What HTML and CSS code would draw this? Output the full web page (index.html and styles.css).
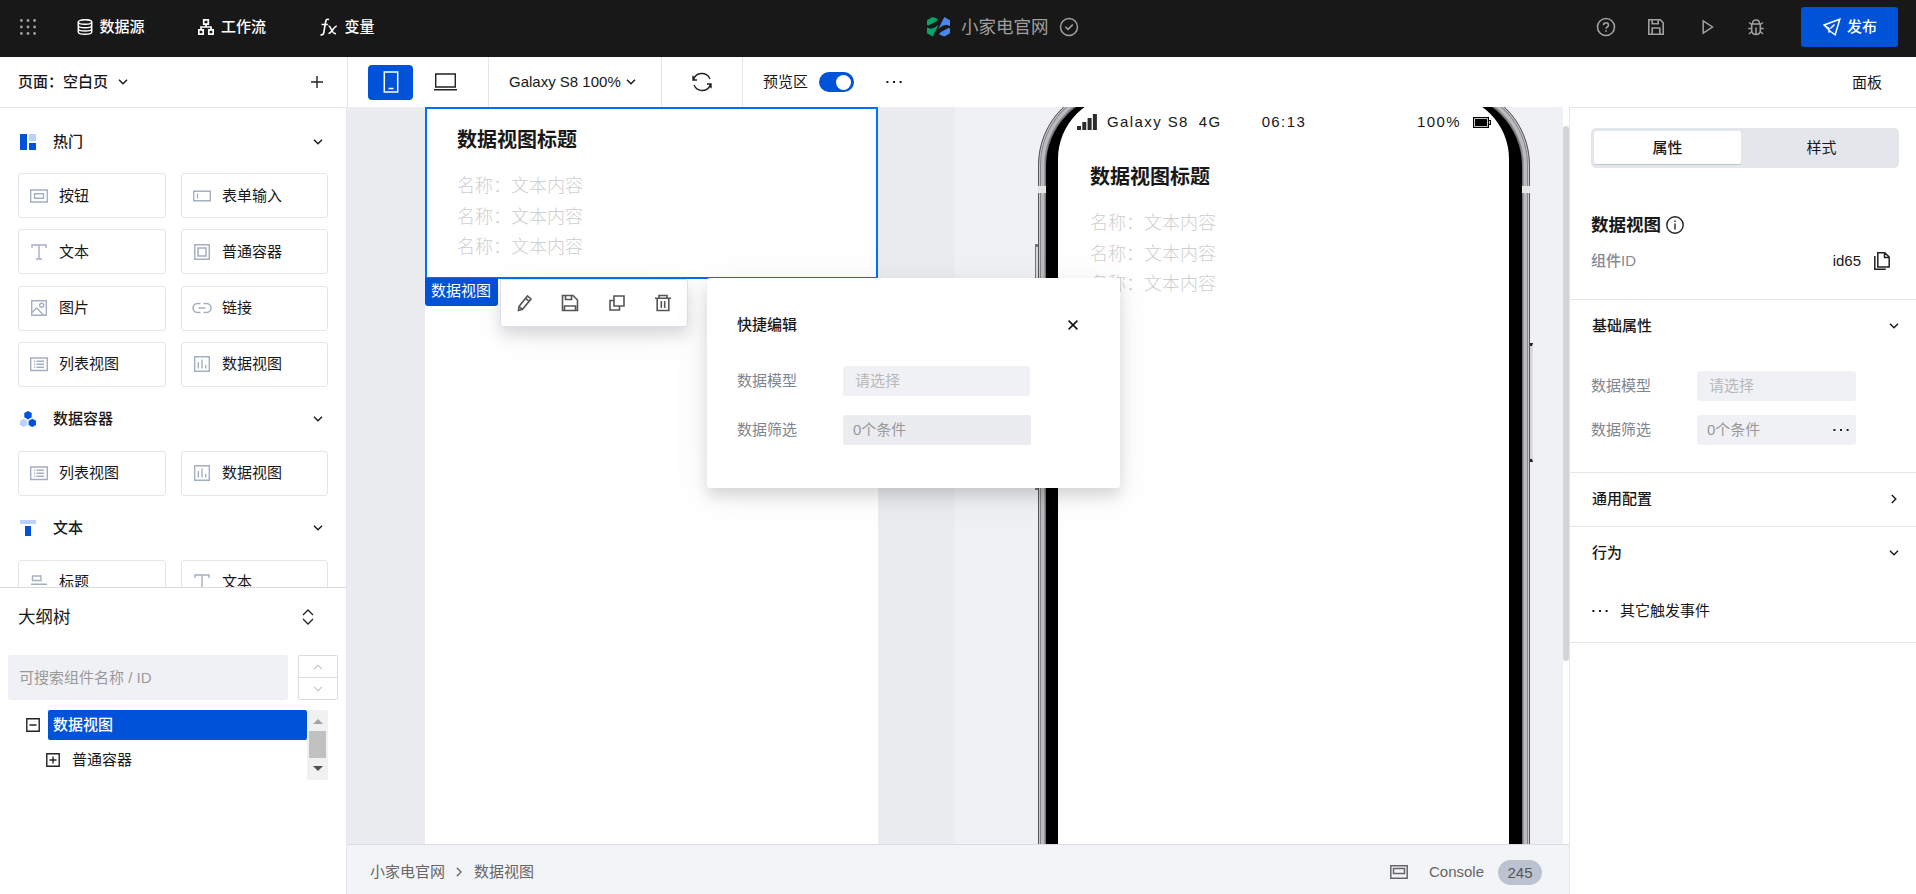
FILE: index.html
```html
<!DOCTYPE html>
<html lang="zh-CN">
<head>
  <meta charset="UTF-8">
  <meta name="viewport" content="width=device-width, initial-scale=1">
  <title>小家电官网</title>
  <link rel="stylesheet" href="styles.css">
</head>
<body>
  <!-- Iconos reutilizados -->
  <svg class="sprite">
    <symbol id="i-down" viewBox="0 0 10 6"><path d="M1 .8l4 4 4-4" fill="none" stroke="currentColor" stroke-width="1.4"/></symbol>
    <symbol id="i-text" viewBox="0 0 18 18"><path d="M2 5V2h14v3M9 2v14M6 16h6" fill="none" stroke="currentColor" stroke-width="1.4"/></symbol>
    <symbol id="i-list" viewBox="0 0 18 18"><path d="M.7 3h16.6v12.5H.7zM4 6.3h1.2M4 9.3h1.2M4 12.3h1.2M6.5 6.3H14M6.5 9.3H14M6.5 12.3H14" fill="none" stroke="currentColor" stroke-width="1.4"/></symbol>
    <symbol id="i-data" viewBox="0 0 18 18"><path d="M1.7 1.7h14.6v14.6H1.7zM5.3 7v6.5M9 4.5v9M12.7 10v3.5" fill="none" stroke="currentColor" stroke-width="1.4"/></symbol>
    <symbol id="i-dots" viewBox="0 0 16 4"><path d="M.4 1h2v2h-2zM7 1h2v2H7zM13.6 1h2v2h-2z" fill="currentColor"/></symbol>
  </svg>

  <header class="topbar">
    <svg class="apps" viewBox="0 0 16 16"><g fill="#a0a0a0"><circle cx="1.4" cy="1.5" r="1.4"/><circle cx="8" cy="1.5" r="1.4"/><circle cx="14.6" cy="1.5" r="1.4"/><circle cx="1.4" cy="8" r="1.4"/><circle cx="8" cy="8" r="1.4"/><circle cx="14.6" cy="8" r="1.4"/><circle cx="1.4" cy="14.5" r="1.4"/><circle cx="8" cy="14.5" r="1.4"/><circle cx="14.6" cy="14.5" r="1.4"/></g></svg>
    <nav class="menu">
      <a class="menu-item">
        <svg width="16" height="16" viewBox="0 0 16 16" fill="none" stroke="#fff" stroke-width="1.5"><ellipse cx="8" cy="3" rx="6.7" ry="2.3"/><path d="M1.3 3v10c0 3 13.4 3 13.4 0V3M1.3 6.4c0 3 13.4 3 13.4 0M1.3 9.7c0 3 13.4 3 13.4 0"/></svg>
        <span>数据源</span>
      </a>
      <a class="menu-item">
        <svg width="16" height="16" viewBox="0 0 16 16" fill="none" stroke="#fff" stroke-width="1.7"><path d="M5.7.8h4.6v4.4H5.7zM.8 10.8h4.4v4.4H.8zM10.8 10.8h4.4v4.4h-4.4zM8 5.2V8M3 10.8V8h10v2.8"/></svg>
        <span>工作流</span>
      </a>
      <a class="menu-item">
        <svg width="18" height="18" viewBox="0 0 18 18" fill="none" stroke="#fff" stroke-width="1.6"><path d="M9 1.600C6.700 .6 6 2 5.600 4L3.800 14.500C3.400 16.600 2 17.400.600 16.500M1.500 6.500h6.300M8.500 8c2.500-.8 3 8.500 7.500 7.600M16.800 8.200c-3-.4-5 7-8.300 7.300"/></svg>
        <span>变量</span>
      </a>
    </nav>
    <div class="project">
      <svg width="24" height="22" viewBox="0 0 24 22"><path d="M0 4.200L5.500.900 11 3 9.500 5.300 1.500 9.500 0 9zM0 11.500l3.500 1.300 4-1 4-3L5.700 20.500 0 17.300z" fill="#07a568"/><path d="M23 17.300l-5.500 3.300L12 18.500l1.500-2.300L21.500 12l1.500.5zM23 10l-3.500-1.300-4 1-4 3L17.300 1 23 4.200z" fill="#4a87ee"/></svg>
      <span>小家电官网</span>
      <svg width="20" height="20" viewBox="0 0 20 20" fill="none" stroke="#a0a0a0" stroke-width="1.500"><circle cx="10" cy="10" r="8.500"/><path d="M6.300 9.800l2.700 2.600 4.800-4.800"/></svg>
    </div>
    <div class="actions">
      <svg width="20" height="20" viewBox="0 0 20 20" fill="none" stroke="#a0a0a0" stroke-width="1.600"><circle cx="10" cy="10" r="8.500"/><path d="M7.500 8.200c0-3.300 5-3.300 5 0 0 1.800-2.500 1.800-2.500 3.600M10 13.200v1.600"/></svg>
      <svg width="16" height="16" viewBox="0 0 16 16" fill="none" stroke="#a0a0a0" stroke-width="1.600"><path d="M.8.800h11.400l3 3v11.400H.8zM4.200.8v4h6v-4M4.200 15V9h7.600v6"/></svg>
      <svg class="play" width="12" height="16" viewBox="0 0 12 16" fill="none" stroke="#a0a0a0" stroke-width="1.500"><path d="M1.200 1.800v12.400L10.500 8z"/></svg>
      <svg width="16" height="17" viewBox="0 0 16 17" fill="none" stroke="#a0a0a0" stroke-width="1.500"><path d="M4.500 4.500c0-4.800 7-4.800 7 0M3.700 5h8.600v6c0 6-8.600 6-8.600 0zM8 8.500V16M3.700 5.500L1 3.500M12.300 5.500L15 3.500M.2 9.500h3.500M12.300 9.500h3.500M3.700 12.500L1 15M12.300 12.500L15 15"/></svg>
      <button class="publish">
        <svg width="18" height="18" viewBox="0 0 18 18" fill="none" stroke="#fff" stroke-width="1.500"><path d="M1 7L16.800 1.200 12.200 16.800 7.500 13.500zM1 7l5 3.500v4.300M7.500 10.500l4-4"/></svg>
        <span>发布</span>
      </button>
    </div>
  </header>

  <div class="toolbar">
    <div class="page-select">
      <span>页面：空白页</span>
      <svg width="10" height="6"><use href="#i-down"/></svg>
      <svg class="add" width="12" height="12" viewBox="0 0 12 12"><path d="M0 6h12M6 0v12" stroke="#222" stroke-width="1.400"/></svg>
    </div>
    <div class="tool devices">
      <button class="device active"><svg width="16" height="22" viewBox="0 0 16 22" fill="none" stroke="#fff" stroke-width="1.500"><path d="M1.300 1h13.400v20H1.300zM5.500 17.500h5"/></svg></button>
      <button class="device"><svg width="23" height="18" viewBox="0 0 23 18" fill="none" stroke="#222" stroke-width="1.400"><path d="M1.700 1h19.600v13H1.700zM0 16.800h23"/></svg></button>
    </div>
    <div class="tool zoom"><span>Galaxy S8 100%</span><svg width="10" height="6"><use href="#i-down"/></svg></div>
    <div class="tool refresh"><svg width="20" height="20" viewBox="0 0 20 20" fill="none" stroke="#222" stroke-width="1.400"><path d="M1.500 8C3.500-.2 14.500-.8 18 7M18.500 12C16.500 20.200 5.500 20.800 2 13M1 3.800V8h4M19 16.200V12h-4"/></svg></div>
    <div class="tool preview">
      <span>预览区</span>
      <i class="switch"></i>
      <svg width="16" height="4"><use href="#i-dots"/></svg>
    </div>
    <span class="panel-link">面板</span>
  </div>

  <div class="workspace">
    <aside class="left">
      <div class="components">
        <div class="group-head">
          <svg width="16" height="16" viewBox="0 0 16 16"><path d="M0 0h7v16H0zM9 9h7v7H9z" fill="#0052d9"/><path d="M9 0h7v7H9z" fill="#bbd3fb"/></svg>
          <b>热门</b><svg class="fold" width="10" height="6"><use href="#i-down"/></svg>
        </div>
        <div class="grid">
          <div class="item"><svg viewBox="0 0 18 18" fill="none" stroke="currentColor" stroke-width="1.400"><path d="M.7 3h16.600v12H.7zM4.500 6.800h9v4.400h-9z"/></svg>按钮</div>
          <div class="item"><svg viewBox="0 0 18 18" fill="none" stroke="currentColor" stroke-width="1.400"><path d="M.7 4.200h16.600v9.600H.7zM4.500 6.500v5"/></svg>表单输入</div>
          <div class="item"><svg><use href="#i-text"/></svg>文本</div>
          <div class="item"><svg viewBox="0 0 18 18" fill="none" stroke="currentColor" stroke-width="1.500"><path d="M1.700 1.700h14.600v14.600H1.700zM5 5h8v8H5z"/></svg>普通容器</div>
          <div class="item"><svg viewBox="0 0 18 18" fill="none" stroke="currentColor" stroke-width="1.400"><path d="M1.700 1.700h14.600v14.600H1.700zM2 13.500L6.500 9l7 7"/><circle cx="11.700" cy="6.300" r="2"/></svg>图片</div>
          <div class="item"><svg class="wide" viewBox="0 0 20 18" fill="none" stroke="currentColor" stroke-width="1.500"><path d="M8.500 4.500h-3c-6 0-6 9 0 9h3M11.500 4.500h3c6 0 6 9 0 9h-3M6.500 9h7"/></svg>链接</div>
          <div class="item"><svg><use href="#i-list"/></svg>列表视图</div>
          <div class="item"><svg><use href="#i-data"/></svg>数据视图</div>
        </div>
        <div class="group-head">
          <svg width="16" height="16" viewBox="0 0 16 16"><path d="M8 0l3.700 2.100v4.200L8 8.400 4.300 6.300V2.100zM12.300 7.700L16 9.800V14l-3.700 2.100L8.600 14V9.800z" fill="#0052d9"/><path d="M3.700 7.700l3.700 2.100V14l-3.700 2.100L0 14V9.800z" fill="#bbd3fb"/></svg>
          <b>数据容器</b><svg class="fold" width="10" height="6"><use href="#i-down"/></svg>
        </div>
        <div class="grid">
          <div class="item"><svg><use href="#i-list"/></svg>列表视图</div>
          <div class="item"><svg><use href="#i-data"/></svg>数据视图</div>
        </div>
        <div class="group-head">
          <svg width="16" height="16" viewBox="0 0 16 16"><path d="M0 0h16v4H0z" fill="#bbd3fb"/><path d="M5 6h6v10H5z" fill="#0052d9"/></svg>
          <b>文本</b><svg class="fold" width="10" height="6"><use href="#i-down"/></svg>
        </div>
        <div class="grid">
          <div class="item"><svg viewBox="0 0 18 18" fill="none" stroke="currentColor" stroke-width="1.400"><path d="M2.500 3h8.500v4.500H2.500zM1 11.300h16M1 15.500h12"/></svg>标题</div>
          <div class="item"><svg><use href="#i-text"/></svg>文本</div>
        </div>
      </div>

      <div class="outline">
        <div class="outline-head">
          <span>大纲树</span>
          <svg width="12" height="16" viewBox="0 0 12 16" fill="none" stroke="#222" stroke-width="1.300"><path d="M1 6l5-5 5 5M1 10l5 5 5-5"/></svg>
        </div>
        <div class="search-row">
          <div class="search">可搜索组件名称 / ID</div>
          <div class="stepper">
            <span><svg class="flip" width="10" height="6"><use href="#i-down"/></svg></span>
            <span><svg width="10" height="6"><use href="#i-down"/></svg></span>
          </div>
        </div>
        <div class="tree-wrap">
          <div class="tree">
            <div class="node">
              <svg width="14" height="14" viewBox="0 0 14 14" fill="none" stroke="#222" stroke-width="1.400"><path d="M.8.800h12.400v12.400H.8zM3.500 7h7"/></svg>
              <b class="selected">数据视图</b>
            </div>
            <div class="node child">
              <svg width="14" height="14" viewBox="0 0 14 14" fill="none" stroke="#222" stroke-width="1.400"><path d="M.8.800h12.400v12.400H.8zM3.500 7h7M7 3.500v7"/></svg>
              <span>普通容器</span>
            </div>
          </div>
          <div class="scrollbar"><i class="arrow-up"></i><i class="thumb"></i><i class="arrow-down"></i></div>
        </div>
      </div>
    </aside>

    <main class="center">
      <div class="stage">
        <div class="editor">
          <div class="page">
            <div class="data-view selected-box">
              <h3>数据视图标题</h3>
              <p>名称：文本内容</p>
              <p>名称：文本内容</p>
              <p>名称：文本内容</p>
            </div>
            <span class="tag">数据视图</span>
            <div class="float-tools">
              <svg width="16" height="18" viewBox="0 0 16 18" fill="none" stroke="#555" stroke-width="1.600"><path d="M2 12.500L10.500 2l3.500 3L5.500 15.300 1.500 16.500zM8.700 4.300l3.500 3M2 12.500l3.500 2.800"/></svg>
              <svg width="18" height="18" viewBox="0 0 18 18" fill="none" stroke="#555" stroke-width="1.600"><path d="M1.500 1.500h10.500l4.500 4.500v10.500h-15zM4.500 1.500v4h6v-4M3.500 16.500v-4.500h11v4.500"/></svg>
              <svg width="16" height="18" viewBox="0 0 16 18" fill="none" stroke="#555" stroke-width="1.600"><path d="M5 2h10v10H5zM5 6.500H1V16h9.500v-4"/></svg>
              <svg width="16" height="18" viewBox="0 0 16 18" fill="none" stroke="#555" stroke-width="1.600"><path d="M0 4.200h16M4 4V1.500h8V4M2.200 4.200v12.300h11.600V4.200M6.300 7v7M9.700 7v7"/></svg>
            </div>
          </div>
        </div>

        <div class="simulator">
          <i class="key key-left"></i>
          <i class="key key-right"></i>
          <div class="phone">
            <i class="band"></i>
            <div class="bezel">
              <div class="screen">
                <div class="status">
                  <svg width="20" height="16" viewBox="0 0 20 16"><path d="M0 12h4v4H0zM5.300 8h4v8h-4zM10.600 4h4v12h-4zM15.900 0h4v16h-4z" fill="#2c2c2c"/></svg>
                  <span class="carrier">Galaxy S8</span><span class="net">4G</span>
                  <span class="time">06:13</span>
                  <span class="level">100%</span>
                  <svg width="18" height="11" viewBox="0 0 18 11"><path d="M.6.600h14.800v9.800H.6zM15.400 3.500h2v4h-2z" fill="none" stroke="#000" stroke-width="1.200"/><path d="M2 2h12v7H2z"/></svg>
                </div>
                <div class="data-view">
                  <h3>数据视图标题</h3>
                  <p>名称：文本内容</p>
                  <p>名称：文本内容</p>
                  <p>名称：文本内容</p>
                </div>
              </div>
            </div>
          </div>
        </div>
        <div class="stage-scroll"><i></i></div>

        <div class="quick-edit">
          <div class="quick-head">
            <b>快捷编辑</b>
            <svg width="10" height="10" viewBox="0 0 10 10"><path d="M.6.600l8.800 8.800M9.400.6L.6 9.400" stroke="#111" stroke-width="1.500"/></svg>
          </div>
          <div class="field"><label>数据模型</label><div class="input placeholder">请选择</div></div>
          <div class="field"><label>数据筛选</label><div class="input filter">0个条件</div></div>
        </div>
      </div>

      <footer class="statusbar">
        <span>小家电官网</span>
        <svg class="crumb" width="6" height="10" viewBox="0 0 6 10"><path d="M.8.800L5 5 .8 9.200" fill="none" stroke="#666" stroke-width="1.300"/></svg>
        <span>数据视图</span>
        <svg class="console-icon" width="18" height="14" viewBox="0 0 18 14" fill="none" stroke="#666" stroke-width="1.500"><path d="M.8.800h16.400v12.400H.8zM3.500 3.500h11v5h-11z"/></svg>
        <span>Console</span>
        <em class="badge">245</em>
      </footer>
    </main>

    <aside class="right">
      <div class="intro">
        <div class="tabs"><span class="tab on">属性</span><span class="tab">样式</span></div>
        <div class="comp-name">
          <b>数据视图</b>
          <svg width="18" height="18" viewBox="0 0 18 18" fill="none" stroke="#222" stroke-width="1.400"><circle cx="9" cy="9" r="8.200"/><path d="M9 7.500V13.500M9 4.500V6"/></svg>
        </div>
        <div class="comp-id">
          <b>组件ID</b><span>id65</span>
          <svg width="16" height="18" viewBox="0 0 16 18" fill="none" stroke="#222" stroke-width="1.500"><path d="M3.800 .8h7l4.400 4.200v10H3.800zM10.500.8V5.500h4.700M.8 4v13.200h11"/></svg>
        </div>
      </div>
      <section class="basic">
        <div class="section-head"><b>基础属性</b><svg width="10" height="6"><use href="#i-down"/></svg></div>
        <div class="field"><label>数据模型</label><div class="input placeholder">请选择</div></div>
        <div class="field"><label>数据筛选</label><div class="input filter">0个条件<svg width="16" height="4"><use href="#i-dots"/></svg></div></div>
      </section>
      <section>
        <div class="section-head"><b>通用配置</b><svg class="turn" width="10" height="6"><use href="#i-down"/></svg></div>
      </section>
      <section class="behavior">
        <div class="section-head"><b>行为</b><svg width="10" height="6"><use href="#i-down"/></svg></div>
        <div class="event"><svg width="16" height="4"><use href="#i-dots"/></svg>其它触发事件</div>
      </section>
    </aside>
  </div>
</body>
</html>
```

FILE: styles.css
```css
* {
  box-sizing: border-box;
}

body {
  margin: 0;
  height: 894px;
  overflow: hidden;
  display: flex;
  flex-direction: column;
  font: 15px/22px "Liberation Sans", "Noto Sans CJK SC", sans-serif;
  color: #181818;
  background: #fff;
}

svg {
  flex: none;
  display: block;
}

b {
  font-weight: 500;
}

button {
  border: 0;
  padding: 0;
  background: none;
  font: inherit;
  color: inherit;
}

.sprite {
  position: absolute;
  width: 0;
  height: 0;
}

/* barra superior */
.topbar {
  height: 57px;
  flex: none;
  display: grid;
  grid-template-columns: 77px 850px auto 1fr;
  align-items: center;
  padding-bottom: 3px;
  background: #181818;
  color: #fff;
}

.apps {
  width: 16px;
  height: 16px;
  margin-left: 20px;
}

.menu {
  display: flex;
  gap: 54px;
}

.menu-item {
  display: flex;
  align-items: center;
  gap: 7px;
  font-weight: 500;
}

.menu-item svg {
  margin-left: -.5px;
}

.project {
  display: flex;
  align-items: center;
  gap: 10px;
  font-size: 17.5px;
  color: #a0a0a0;
}

.actions {
  display: flex;
  align-items: center;
  justify-content: flex-end;
  padding-right: 18px;
}

.actions > svg {
  margin-right: 37px;
}

.actions > svg:first-child {
  margin-right: 32px;
}

.actions > svg:nth-child(2) {
  margin-right: 38px;
}

.actions > svg:nth-child(3) {
  margin-right: 34px;
}

.publish {
  display: flex;
  align-items: center;
  gap: 6px;
  width: 97px;
  height: 40px;
  padding-left: 22px;
  border-radius: 3px;
  background: #0052d9;
  color: #fff;
  font-weight: 500;
}

/* barra de herramientas */
.toolbar {
  height: 50px;
  flex: none;
  display: flex;
}

.page-select {
  width: 347px;
  display: flex;
  align-items: center;
  padding: 0 24px 0 18px;
  gap: 10px;
  font-weight: 500;
}

.page-select .add {
  margin-left: auto;
}

.tool {
  display: flex;
  align-items: center;
  border-left: 1px solid #e3e6eb;
}

.devices {
  width: 141px;
  padding-left: 20px;
  gap: 10px;
}

.device {
  width: 45px;
  height: 35px;
  border-radius: 4px;
  display: flex;
  align-items: center;
  justify-content: center;
}

.device.active {
  background: #0052d9;
}

.zoom {
  width: 173px;
  padding-left: 20px;
  gap: 5px;
}

.refresh {
  width: 81px;
  padding-left: 30px;
}

.preview {
  padding-left: 20px;
}

.switch {
  width: 35px;
  height: 20px;
  margin: 0 32px 0 11px;
  border-radius: 10px;
  background: #0052d9;
}

.switch::after {
  content: "";
  display: block;
  width: 15px;
  height: 15px;
  margin: 3px 0 0 17px;
  border-radius: 50%;
  background: #fff;
}

.panel-link {
  margin: 15px 34px 0 auto;
}

.workspace {
  flex: 1;
  min-height: 0;
  display: flex;
}

/* panel izquierdo */
.left {
  width: 347px;
  display: flex;
  flex-direction: column;
  border-top: 1px solid #e3e6eb;
  border-right: 1px solid #e3e6eb;
}

.components {
  height: 479px;
  flex: none;
  overflow: hidden;
  padding: 1px 18px 0;
}

.group-head {
  height: 64px;
  display: flex;
  align-items: center;
  padding: 0 5px 0 2px;
}

.group-head b {
  margin-left: 17px;
}

.group-head:first-child {
  padding-top: 2px;
}

.fold {
  margin-left: auto;
}

.grid {
  display: grid;
  grid-template-columns: 148px 147px;
  grid-auto-rows: 45px;
  gap: 11.3px 15px;
}

.item {
  display: flex;
  align-items: center;
  border: 1px solid #e3e6eb;
  border-radius: 3px;
  padding-left: 11px;
}

.item svg {
  width: 18px;
  height: 18px;
  margin-right: 11px;
  color: #a4afc2;
}

.item svg.wide {
  width: 20px;
  margin: 0 10px 0 -1px;
}

.outline {
  border-top: 1px solid #dcdcdc;
}

.outline-head {
  height: 58px;
  display: flex;
  align-items: center;
  justify-content: space-between;
  padding: 0 32px 0 18px;
  font-size: 17.5px;
}

.search-row {
  display: flex;
  gap: 10px;
  margin: 9px 8px 10px;
}

.search {
  width: 280px;
  height: 45px;
  padding: 12px 11px;
  border-radius: 3px;
  background: #f0f1f5;
  color: #999;
}

.stepper {
  width: 40px;
  height: 45px;
  border: 1px solid #dcdcdc;
  border-radius: 2px;
  color: #d0d0d0;
}

.stepper span {
  height: 21px;
  display: flex;
  align-items: center;
  justify-content: center;
}

.stepper span + span {
  height: 22px;
  border-top: 1px solid #dcdcdc;
}

.flip {
  transform: rotate(180deg);
}

.tree-wrap {
  width: 328px;
  height: 70px;
  display: flex;
}

.tree {
  flex: 1;
}

.node {
  height: 30px;
  display: flex;
  align-items: center;
  gap: 8px;
  padding-left: 26px;
}

.selected {
  flex: 1;
  height: 30px;
  line-height: 30px;
  padding-left: 5px;
  border-radius: 2px;
  background: #0052d9;
  color: #fff;
}

.node.child {
  margin-top: 5px;
  padding-left: 46px;
  gap: 12px;
}

.scrollbar {
  width: 21px;
  padding: 12px 2px 0;
  display: flex;
  flex-direction: column;
  align-items: center;
  background: #f1f1f1;
}

.arrow-up,
.arrow-down {
  border: 5px solid transparent;
  border-top-width: 0;
  border-bottom: 5px solid #a3a3a3;
  margin-top: -3px;
}

.arrow-down {
  border-bottom: 0;
  border-top: 5px solid #505050;
  margin-top: 8px;
}

.thumb {
  width: 17px;
  height: 27px;
  margin-top: 7px;
  background: #c1c1c1;
}

/* zona central */
.center {
  width: 1222px;
  display: flex;
  flex-direction: column;
}

.stage {
  position: relative;
  height: 737px;
  display: flex;
  overflow: hidden;
}

.editor {
  width: 608px;
  padding-left: 78px;
  background: #ebecf0;
}

.page {
  position: relative;
  width: 453px;
  height: 100%;
  background: #fff;
}

.data-view {
  padding: 18px 32px;
}

.data-view h3 {
  margin: 0 0 16px;
  font-size: 20px;
  line-height: 29px;
  font-weight: 700;
}

.data-view p {
  margin: 0;
  font-size: 18px;
  line-height: 30.6px;
  font-weight: 300;
  color: #cfcfcf;
}

.selected-box {
  height: 172px;
  padding: 17px 30px;
  border: 2px solid #006eff;
}

.tag {
  position: absolute;
  left: 0;
  top: 171px;
  width: 73px;
  height: 28px;
  padding-left: 6px;
  line-height: 26px;
  border-radius: 0 0 3px 3px;
  background: #0052d9;
  color: #fff;
}

.float-tools {
  position: absolute;
  left: 75px;
  top: 172px;
  width: 188px;
  height: 48px;
  display: flex;
  align-items: center;
  justify-content: space-between;
  padding: 0 16px;
  border: 1px solid #dde0ea;
  border-radius: 3px;
  background: #fff;
  box-shadow: 0 8px 14px rgba(0,0,0,0.12), 0 8px 40px rgba(0,0,0,0.06);
}

.float-tools svg:nth-child(2) {
  margin-left: -2px;
}

/* teléfono */
.simulator {
  position: relative;
  width: 608px;
  padding-left: 83px;
  background: #f0f1f5;
}

.phone {
  position: relative;
  width: 492px;
  height: 900px;
  margin-top: -22px;
  padding: 0 7px;
  border: 1px solid #55565c;
  border-radius: 80px;
  background: #77777a;
  box-shadow: inset 0 0 0 1px #c9c9cb, inset 0 0 0 2px #85858a, inset 0 0 0 5px #bcbcc0, inset 0 0 0 6px #98989c;
}

.band {
  position: absolute;
  left: -1px;
  right: -1px;
  top: 100px;
  height: 7px;
  background: #e6e6e3;
}

.bezel {
  position: relative;
  height: 890px;
  margin-top: 7px;
  padding: 2px 13px 0 12px;
  border-radius: 73px;
  background: #000;
}

.screen {
  height: 870px;
  border-radius: 64px 64px 0 0;
  background: #fff;
}

.key {
  position: absolute;
  width: 4px;
  border: 1px solid #777;
  border-width: 3px 1px;
  background: #d6d6d6;
}

.key-left {
  left: 80px;
  top: 137px;
  height: 246px;
}

.key-right {
  left: 574px;
  top: 236px;
  height: 119px;
  border-color: #222 #ddd;
}

.status {
  height: 54px;
  display: flex;
  align-items: center;
  padding: 0 18px 0 19px;
  letter-spacing: 1.4px;
}

.carrier {
  margin: 0 10px 0 10px;
}

.net {
  margin-right: 40px;
}

.level {
  margin: 0 12px 0 auto;
}

.screen .data-view {
  padding-top: 14px;
}

.stage-scroll {
  width: 6px;
  padding-top: 19px;
  background: #fff;
}

.stage-scroll i {
  display: block;
  height: 535px;
  border-radius: 3px;
  background: #d4d4d4;
}

/* edición rápida */
.quick-edit {
  position: absolute;
  left: 360px;
  top: 171px;
  width: 413px;
  height: 210px;
  padding: 36px 30px 0;
  border-radius: 3px;
  background: #fff;
  box-shadow: 0 8px 14px rgba(0,0,0,0.12), 0 8px 40px rgba(0,0,0,0.07);
}

.quick-head {
  display: flex;
  align-items: center;
  justify-content: space-between;
  padding-right: 12px;
  margin-bottom: 30px;
}

.field {
  display: flex;
  align-items: center;
  height: 30px;
}

.field label {
  width: 106px;
  color: #7f8590;
}

.input {
  width: 187px;
  height: 30px;
  line-height: 30px;
  padding: 0 10px;
  border-radius: 3px;
  background: #f0f1f5;
  color: #999;
}

.placeholder {
  padding-left: 12px;
  color: #b8b8b8;
}

.filter {
  display: flex;
  align-items: center;
  justify-content: space-between;
}

.quick-edit .field + .field {
  margin-top: 19px;
}

.quick-edit .filter {
  width: 188px;
  background: #ebecf0;
}

.statusbar {
  flex: 1;
  display: flex;
  align-items: center;
  padding: 5px 27px 0 23px;
  border-top: 1px solid #d8dbe4;
  background: #f3f4f7;
  color: #666;
}

.crumb {
  margin: 0 12px 0 11px;
}

.console-icon {
  margin: 0 21px 0 auto;
}

.badge {
  width: 44px;
  height: 25px;
  margin-left: 14px;
  line-height: 26px;
  border-radius: 13px;
  text-align: center;
  font-style: normal;
  background: #bbc3d0;
  color: #555;
}

/* panel derecho */
.right {
  flex: 1;
  border-top: 1px solid #e3e6eb;
  border-left: 1px solid #e3e6eb;
}

.intro {
  height: 192px;
  padding: 20px 17px 0 21px;
  border-bottom: 1px solid #e3e6eb;
}

.tabs {
  display: flex;
  height: 40px;
  padding: 3px;
  border-radius: 5px;
  background: #e3e6eb;
}

.tab {
  flex: 1;
  padding-left: 6px;
  line-height: 33px;
  text-align: center;
}

.tab.on {
  flex: none;
  width: 147px;
  height: 34px;
  padding: 0;
  border-radius: 3px;
  border-bottom: 1px solid #bbc3d0;
  background: #fff;
  font-weight: 500;
}

.comp-name {
  display: flex;
  align-items: center;
  gap: 5px;
  height: 30px;
  margin-top: 42px;
  font-size: 17.5px;
}

.comp-name b {
  font-weight: 700;
}

.comp-id {
  display: flex;
  align-items: center;
  height: 30px;
  margin-top: 6px;
  padding-right: 9px;
}

.comp-id b {
  color: #858a95;
}

.comp-id span {
  margin: 0 13px 0 auto;
}

.right section {
  padding: 0 17px 0 21px;
  border-bottom: 1px solid #e3e6eb;
}

.section-head {
  height: 53px;
  display: flex;
  align-items: center;
  justify-content: space-between;
  padding: 0 0 2px 1px;
}

.turn {
  transform: rotate(-90deg);
}

.basic {
  height: 173px;
}

.basic .field {
  margin-top: 18px;
}

.basic .field + .field {
  margin-top: 14px;
}

.basic .input {
  width: 159px;
  padding-right: 7px;
}

.basic .filter svg {
  color: #222;
}

.behavior {
  height: 116px;
}

.event {
  display: flex;
  align-items: center;
  gap: 12px;
  margin: 20px 0 0 1px;
}
```
